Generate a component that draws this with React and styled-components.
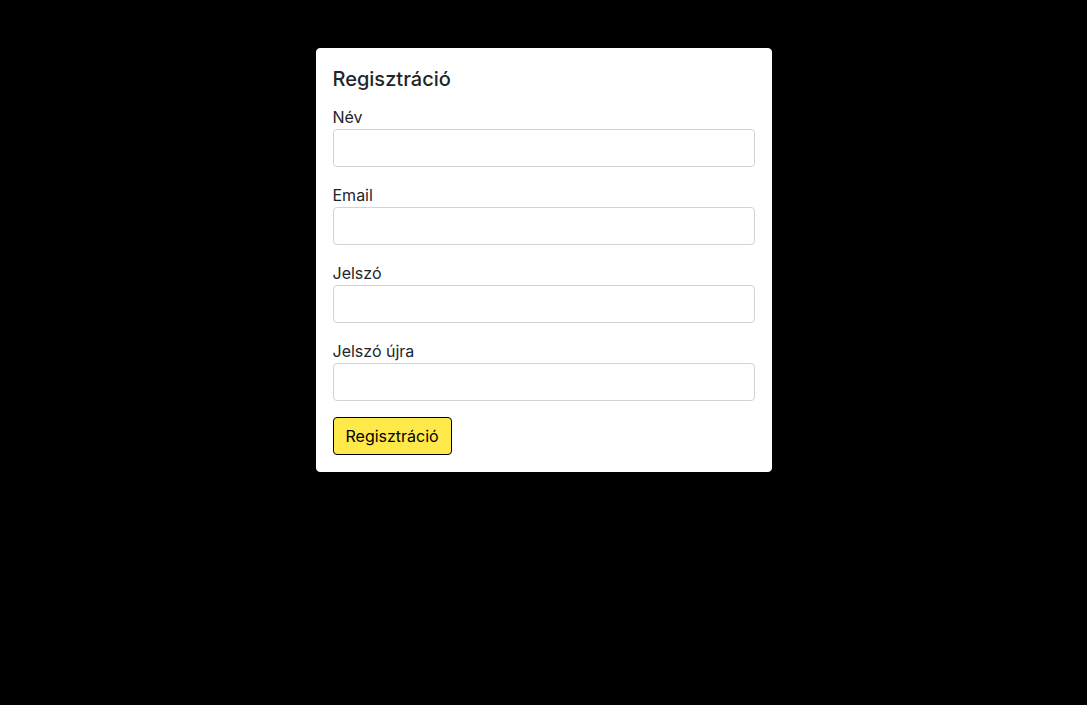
import React from "react";
import styled, { createGlobalStyle } from "styled-components";

const Global = createGlobalStyle`
  html, body { margin: 0; padding: 0; background: #000; }
  body {
    font-family: Inter, "Noto Sans", "Liberation Sans", sans-serif;
    color: #212529;
    font-size: 16px;
    line-height: 1.5;
  }
  * { box-sizing: border-box; }
`;

const Page = styled.div`
  display: flex;
  justify-content: center;
  align-items: flex-start;
  padding-top: 48px;
  min-height: 705px;
`;

const Card = styled.form`
  width: 456px;
  background: #fff;
  border: 1px solid #fff;
  border-radius: 4px;
  padding: 16px;
  display: flex;
  flex-direction: column;
`;

const Title = styled.h5`
  margin: 0 0 14px;
  padding-top: 2px;
  font-size: 20px;
  font-weight: 500;
  line-height: 1.2;
  color: #212529;
`;

const Field = styled.div`
  display: flex;
  flex-direction: column;
  margin-bottom: 16px;
`;

const Label = styled.label`
  font-size: 16px;
  line-height: 24px;
  color: #212529;
`;

const Input = styled.input`
  height: 38px;
  width: 100%;
  border: 1px solid #ced4da;
  border-radius: 4px;
  padding: 6px 12px;
  font: inherit;
  background: #fff;
  outline: none;
`;

const Button = styled.button`
  align-self: flex-start;
  height: 38px;
  padding: 6px 12px;
  background: #ffe94a;
  border: 1px solid #000;
  border-radius: 4px;
  font-family: inherit;
  font-size: 16px;
  line-height: 24px;
  color: #000;
  cursor: pointer;
`;

const fields = [
  { label: "Név", type: "text" },
  { label: "Email", type: "email" },
  { label: "Jelszó", type: "password" },
  { label: "Jelszó újra", type: "password" },
];

export default function App() {
  return (
    <>
      <Global />
      <Page>
        <Card onSubmit={(e) => e.preventDefault()}>
          <Title>Regisztráció</Title>
          {fields.map((f) => (
            <Field key={f.label}>
              <Label>{f.label}</Label>
              <Input type={f.type} />
            </Field>
          ))}
          <Button type="submit">Regisztráció</Button>
        </Card>
      </Page>
    </>
  );
}
